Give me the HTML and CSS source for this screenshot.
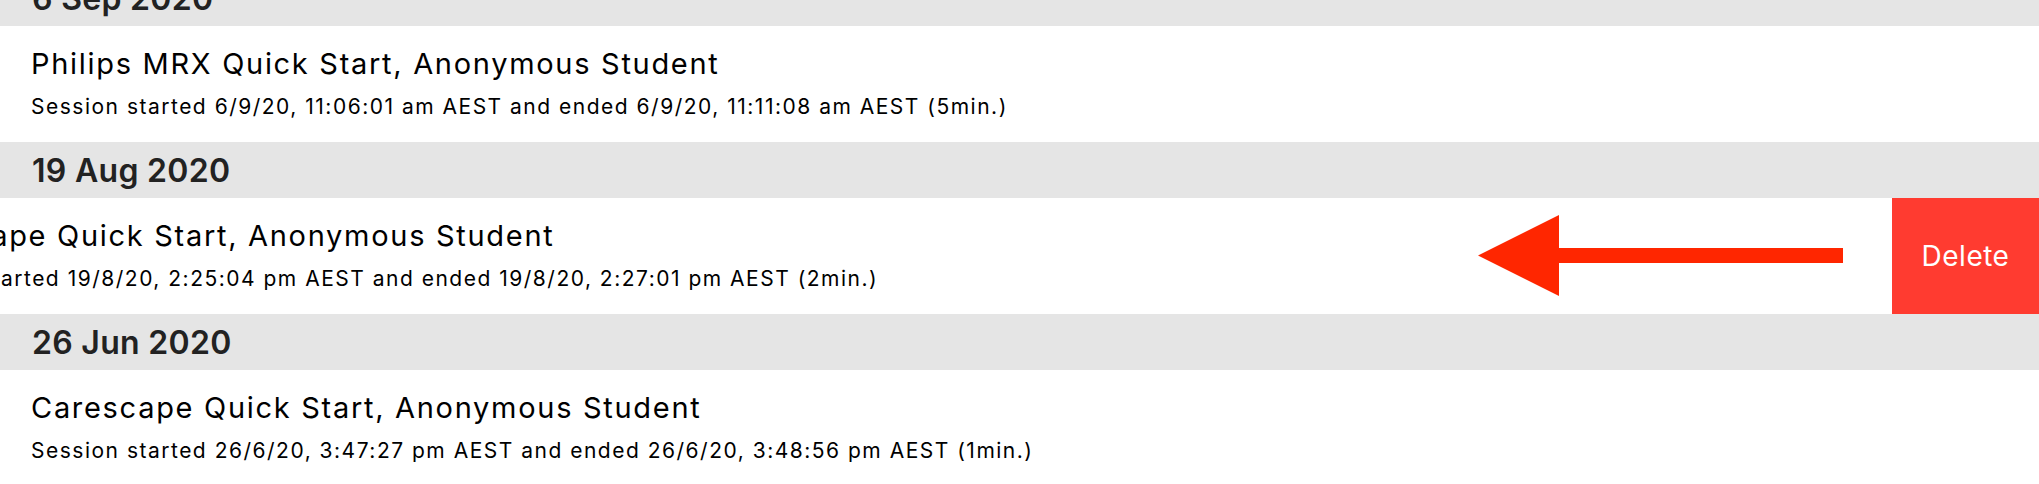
FILE: index.html
```html
<!DOCTYPE html>
<html lang="en">
<head>
    <meta charset="UTF-8">
    <meta name="viewport" content="width=device-width, initial-scale=1.0">
    <title>Session History</title>
    <link rel="stylesheet" href="styles.css">
</head>
<body>
    <div class="history">
        <div class="day-header">6 Sep 2020</div>
        <div class="session">
            <div class="session-body">
                <div class="session-title">Philips MRX Quick Start, Anonymous Student</div>
                <div class="session-time">Session started 6/9/20, 11:06:01 am AEST and ended 6/9/20, 11:11:08 am AEST (5min.)</div>
            </div>
        </div>

        <div class="day-header">19 Aug 2020</div>
        <div class="session swiped">
            <div class="session-body">
                <div class="session-title">Carescape Quick Start, Anonymous Student</div>
                <div class="session-time">Session started 19/8/20, 2:25:04 pm AEST and ended 19/8/20, 2:27:01 pm AEST (2min.)</div>
            </div>
            <button class="delete-btn">Delete</button>
            <!-- annotation arrow: swipe left to delete -->
            <svg class="swipe-arrow" width="380" height="100" viewBox="0 0 380 100">
                <polygon points="8,47.5 89,7 89,40 373,40 373,55 89,55 89,88" fill="#ff2600"/>
            </svg>
        </div>

        <div class="day-header">26 Jun 2020</div>
        <div class="session">
            <div class="session-body">
                <div class="session-title">Carescape Quick Start, Anonymous Student</div>
                <div class="session-time">Session started 26/6/20, 3:47:27 pm AEST and ended 26/6/20, 3:48:56 pm AEST (1min.)</div>
            </div>
        </div>
    </div>
</body>
</html>
```

FILE: styles.css
```css
body {
    margin: 0;
    padding: 0;
    background-color: #fff;
    font-family: Inter, "Liberation Sans", sans-serif;
    overflow: hidden;
}

.history {
    margin-top: -30px;
}

.day-header {
    height: 54px;
    line-height: 54px;
    padding: 2px 0 0 32px;
    background-color: #e5e5e5;
    font-size: 32px;
    font-weight: 600;
    letter-spacing: 0.3px;
    color: #222;
}

.session {
    position: relative;
    display: flex;
    height: 116px;
    background-color: #fff;
    overflow: hidden;
}

.session-body {
    flex: 1;
    padding: 20px 0 0 31px;
    white-space: nowrap;
}

.swiped .session-body {
    margin-left: -147px;
}

.session-title {
    font-size: 29px;
    line-height: 36px;
    letter-spacing: 1.7px;
    color: #000;
}

.session-time {
    margin-top: 12px;
    font-size: 21px;
    line-height: 26px;
    letter-spacing: 1.5px;
    color: #000;
}

.delete-btn {
    width: 147px;
    flex-shrink: 0;
    border: none;
    padding: 0;
    background-color: #ff3b30;
    color: #fff;
    font-family: inherit;
    font-size: 28px;
    letter-spacing: 0.5px;
}

.swipe-arrow {
    position: absolute;
    left: 1470px;
    top: 10px;
}
```
